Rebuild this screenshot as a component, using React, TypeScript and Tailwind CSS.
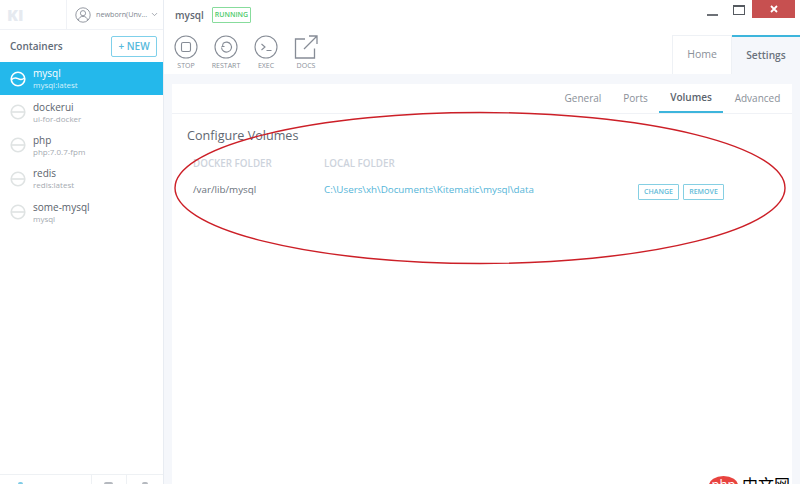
import { ChevronDown } from "lucide-react"

const containers = [
  { name: "mysql", image: "mysql:latest", active: true },
  { name: "dockerui", image: "ui-for-docker" },
  { name: "php", image: "php:7.0.7-fpm" },
  { name: "redis", image: "redis:latest" },
  { name: "some-mysql", image: "mysql" },
]

function StatusIcon({ active }: { active?: boolean }) {
  return (
    <svg width="16" height="16" viewBox="0 0 16 16" fill="none" className="shrink-0">
      <circle cx="8" cy="8" r="6.8" stroke={active ? "#ffffff" : "#dfe3e3"} strokeWidth="1.6" />
      {active ? (
        <path d="M1.5 8.6C4 6.4 6 6.6 8 7.6s4.4 1.2 6.5-.6" stroke="#ffffff" strokeWidth="1.5" />
      ) : (
        <path d="M1.5 8h13" stroke="#dfe3e3" strokeWidth="1.6" />
      )}
    </svg>
  )
}

function Sidebar() {
  return (
    <div className="flex w-[164px] shrink-0 flex-col border-r border-[#e8ecf2] bg-white">
      <div className="flex h-[30px] shrink-0 border-b border-[#f0f2f6]">
        <div className="flex w-[67px] items-center border-r border-[#f0f2f6] pl-[7px] text-[16px] font-extrabold leading-none text-[#e6eaf0]">
          KI
        </div>
        <div className="flex flex-1 items-center pl-[8px] text-[#7e858f]">
          <svg width="16" height="16" viewBox="0 0 16 16" fill="none" stroke="#8a8f99" strokeWidth="0.9" className="shrink-0">
            <circle cx="8" cy="8" r="7.2" />
            <circle cx="8" cy="6.2" r="2.6" />
            <path d="M3.4 13.2c.5-2.6 2.2-3.8 4.6-3.800s4.100 1.200 4.600 3.800" />
          </svg>
          <span className="ml-[5px] text-[7.200px] whitespace-nowrap">newborn(Unv...</span>
          <ChevronDown size={9} className="ml-[3px] text-[#8a8f99]" />
        </div>
      </div>
      <div className="flex h-[32px] shrink-0 items-center justify-between pl-[10px] pr-[6px]">
        <span className="text-[10px] font-semibold text-[#5f6b77]">Containers</span>
        <div className="flex h-[21px] w-[46px] items-center justify-center rounded-[2px] border border-[#7fd0ea] text-[10px] font-semibold text-[#55b9dc]">
          + NEW
        </div>
      </div>
      <div className="flex flex-col">
        {containers.map((c) => (
          <div
            key={c.name}
            className={`flex h-[33.400px] items-center pl-[10px] ${c.active ? "bg-[#24b8eb]" : "bg-white"}`}
          >
            <StatusIcon active={c.active} />
            <div className="ml-[7px] flex flex-col">
              <span className={`text-[10px] leading-[12px] ${c.active ? "text-white" : "text-[#5b636d]"}`}>{c.name}</span>
              <span className={`text-[8px] leading-[11px] ${c.active ? "text-[#d5f1fb]" : "text-[#a5aab1]"}`}>{c.image}</span>
            </div>
          </div>
        ))}
      </div>
      {/* bottom bar, icons are cut by the window edge */}
      <div className="mt-auto flex h-[10px] border-t border-[#eef1f4]">
        <div className="w-[92px] border-r border-[#eef1f4] pl-[18px] pt-[7px]">
          <div className="h-[2px] w-[5px] rounded-t-full bg-[#7fcbe6]" />
        </div>
        <div className="w-[35px] border-r border-[#eef1f4] pl-[12px] pt-[7px]">
          <div className="h-[2px] w-[9px] rounded-t-full bg-[#b5b9bf]" />
        </div>
        <div className="pl-[15px] pt-[7px]">
          <div className="h-[2px] w-[6px] rounded-t-full bg-[#b5b9bf]" />
        </div>
      </div>
    </div>
  )
}

function Action({ label, children }: { label: string; children: React.ReactNode }) {
  return (
    <div className="flex w-[40px] flex-col items-center gap-[3px]">
      <div className="h-[24px] w-[24px]">{children}</div>
      <span className="text-[7px] leading-[8px] text-[#8a9099]">{label}</span>
    </div>
  )
}

function Toolbar() {
  const stroke = { fill: "none", stroke: "#868c96", strokeWidth: 1.1 }
  return (
    <div className="flex h-[74px] shrink-0 justify-between bg-white">
      <div className="pl-[11px] pt-[7px]">
        <div className="flex h-[16px] items-center">
          <span className="text-[10px] font-semibold text-[#5f6771]">mysql</span>
          <span className="ml-[8px] flex h-[16px] items-center rounded-[1px] border border-[#87dc9c] px-[2px] text-[7px] font-semibold text-[#4fcb6c]">
            RUNNING
          </span>
        </div>
        <div className="ml-[-9px] mt-[12px] flex">
          <Action label="STOP">
            <svg viewBox="0 0 24 24" {...stroke}>
              <circle cx="12" cy="12" r="11" />
              <rect x="7.500" y="7.500" width="9" height="9" rx="1.500" />
            </svg>
          </Action>
          <Action label="RESTART">
            <svg viewBox="0 0 24 24" {...stroke}>
              <circle cx="12" cy="12" r="11" />
              <path d="M9 8.500a5 5 0 1 1-1.500 4" />
              <path d="M7.500 11.500h3M9 8.500l-.5 3" />
            </svg>
          </Action>
          <Action label="EXEC">
            <svg viewBox="0 0 24 24" {...stroke}>
              <circle cx="12" cy="12" r="11" />
              <path d="M7.500 9l3.500 3-3.500 3M12.500 15.500h5" />
            </svg>
          </Action>
          <Action label="DOCS">
            <svg viewBox="0 0 24 24" {...stroke} strokeWidth={1.3}>
              <path d="M11 4H1.500v19h19v-9.500" />
              <path d="M10 14L23 1M15 1h8v8" />
            </svg>
          </Action>
        </div>
      </div>
      <div className="flex flex-col items-end">
        <div className="flex h-[35px]">
          <div className="mr-[15px] mt-[14px] h-[1.500px] w-[11px] bg-[#6d7177]" />
          <div className="mr-[7px] mt-[5px] h-[10px] w-[12px] border border-t-[2px] border-[#555a60]" />
          <div className="mr-[5px] flex h-[18px] w-[43px] items-center justify-center bg-[#c75050]">
            <svg width="8" height="8" viewBox="0 0 8 8" stroke="#ffffff" strokeWidth="1.800">
              <path d="M1 1l6 6M7 1L1 7" />
            </svg>
          </div>
        </div>
        <div className="flex h-[39px] grow">
          <div className="flex w-[60px] items-center justify-center border border-b-0 border-[#eef1f5] bg-white text-[10.500px] text-[#8a9099]">
            Home
          </div>
          <div className="flex w-[68px] items-center justify-center border-t-2 border-[#3db5dc] bg-[#f5f7fb] text-[10.200px] font-semibold text-[#6a727c]">
            Settings
          </div>
        </div>
      </div>
    </div>
  )
}

function SettingsCard() {
  return (
    <div className="mx-[8px] mt-[10px] flex-1 bg-white">
      <div className="flex h-[30px] items-stretch justify-end border-b border-[#f0f2f6] text-[10px] text-[#8a9099]">
        <span className="flex w-[58px] items-center justify-center">General</span>
        <span className="flex w-[47px] items-center justify-center">Ports</span>
        <span className="flex w-[64px] items-center justify-center border-b-2 border-[#3db5dc] font-semibold text-[#5b636d]">Volumes</span>
        <span className="flex w-[69px] items-center justify-center">Advanced</span>
      </div>
      <div className="px-[15px] pt-[14px]">
        <h2 className="text-[12.600px] leading-[16px] text-[#5f6771]">Configure Volumes</h2>
        <div className="mt-[14px] flex pl-[6px] text-[9.800px] font-semibold leading-[12px] text-[#cdd3dc]">
          <span className="w-[131px]">DOCKER FOLDER</span>
          <span>LOCAL FOLDER</span>
        </div>
        <div className="mt-[12px] flex h-[16px] items-center pl-[6px] text-[9.800px]">
          <span className="w-[131px] text-[#6a727c]">/var/lib/mysql</span>
          <span className="w-[314px] text-[#55b5d8]">C:\Users\xh\Documents\Kitematic\mysql\data</span>
          <div className="mt-[4px] flex gap-[4px] text-[7px] font-semibold text-[#62bbd8]">
            <span className="flex h-[16px] w-[41px] items-center justify-center rounded-[1px] border border-[#85cfe3]">CHANGE</span>
            <span className="flex h-[16px] w-[41px] items-center justify-center rounded-[1px] border border-[#85cfe3]">REMOVE</span>
          </div>
        </div>
      </div>
    </div>
  )
}

export default function App() {
  return (
    <div
      className="relative flex h-[484px] w-[800px] overflow-hidden bg-[#f5f7fb]"
      style={{ fontFamily: '"Open Sans", "Noto Sans CJK SC", sans-serif' }}
    >
      <Sidebar />
      <div className="flex min-w-0 flex-1 flex-col">
        <Toolbar />
        <SettingsCard />
      </div>
      {/* red annotation drawn over the screenshot */}
      <svg className="absolute left-0 top-0" width="800" height="484" fill="none">
        <ellipse cx="480" cy="188" rx="305" ry="75.500" stroke="#cc1f27" strokeWidth="1.400" />
      </svg>
      {/* watermark, runs off the bottom edge like the reference */}
      <div className="absolute left-[709px] top-[476px] flex items-start gap-[4px]">
        <span className="flex h-[18px] w-[29px] justify-center rounded-[50%] bg-[#e8433f] pt-[2px] text-[13px] leading-none text-white">php</span>
        <span className="text-[16px] leading-[18px] text-black">中文网</span>
      </div>
    </div>
  )
}
